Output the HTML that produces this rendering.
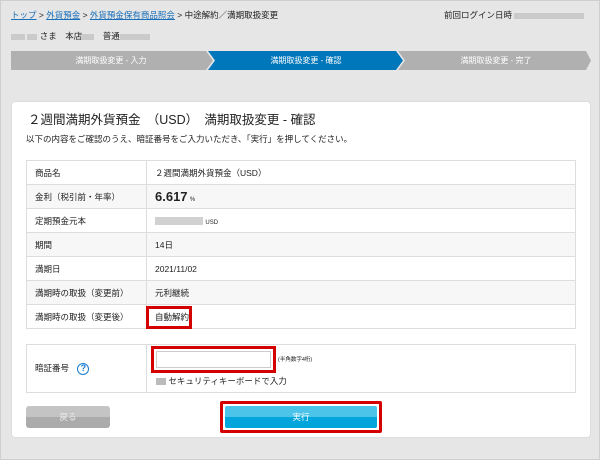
<!DOCTYPE html>
<html><head><meta charset="utf-8"><style>
*{margin:0;padding:0;box-sizing:border-box}
body{width:600px;height:460px;background:#e6e6e6;font-family:"Liberation Sans","Noto Sans CJK JP",sans-serif;font-size:9px;color:#222;position:relative;overflow:hidden;border:1px solid #cfcfcf}
.a{position:absolute}
a{color:#1a6fb8;text-decoration:underline}
.blur{display:inline-block;background:#bdbdbd;height:6px;vertical-align:middle;opacity:.7}
.step{position:absolute;top:50px;height:19px;color:#fff;font-size:8px;text-align:center;line-height:19px}
.panel{position:absolute;left:10px;top:100px;width:580px;height:337px;background:#fff;border-radius:4px;border:1px solid #ddd}
table{border-collapse:collapse;position:absolute;left:25px;width:550px}
td{border:1px solid #ddd;height:24px;padding-left:8px;font-size:8.5px}
td.l{width:120px}
</style></head><body>
<div class="a" style="left:10px;top:8px;font-size:8.5px"><a>トップ</a> &gt; <a>外貨預金</a> &gt; <a>外貨預金保有商品照会</a> &gt; 中途解約／満期取扱変更</div>
<div class="a" style="left:443px;top:8px;font-size:8.5px">前回ログイン日時 <span class="blur" style="width:70px"></span></div>
<div class="a" style="left:10px;top:29px;font-size:8.5px"><span class="blur" style="width:14px"></span> <span class="blur" style="width:10px"></span> さま　本店<span class="blur" style="width:12px"></span>　普通<span class="blur" style="width:30px"></span></div>
<svg class="a" style="left:10px;top:50px" width="580" height="19">
<polygon points="0,0 195,0 202,9.5 195,19 0,19" fill="#b0b0b0"/>
<polygon points="197,0 385,0 392,9.5 385,19 197,19 204,9.5" fill="#0077bb"/>
<polygon points="387,0 575,0 580,9.5 575,19 387,19 394,9.5" fill="#b0b0b0"/>
</svg>
<div class="step" style="left:10px;width:200px">満期取扱変更 - 入力</div>
<div class="step" style="left:210px;width:190px">満期取扱変更 - 確認</div>
<div class="step" style="left:400px;width:190px">満期取扱変更 - 完了</div>
<div class="panel"></div>
<div class="a" style="left:27px;top:108px;font-size:12.5px">２週間満期外貨預金　（USD）　満期取扱変更 - 確認</div>
<div class="a" style="left:25px;top:132px;font-size:8.5px">以下の内容をご確認のうえ、暗証番号をご入力いただき、「実行」を押してください。</div>
<table style="top:159px">
<tr><td class="l">商品名</td><td>２週間満期外貨預金（USD）</td></tr>
<tr style="background:#f7f7f7"><td class="l">金利（税引前・年率）</td><td><b style="font-size:13px">6.617</b> <span style="font-size:6px">%</span></td></tr>
<tr><td class="l">定期預金元本</td><td><span class="blur" style="width:48px;height:8px"></span> <span style="font-size:6px">USD</span></td></tr>
<tr style="background:#f7f7f7"><td class="l">期間</td><td>14日</td></tr>
<tr><td class="l">満期日</td><td>2021/11/02</td></tr>
<tr style="background:#f7f7f7"><td class="l">満期時の取扱（変更前）</td><td>元利継続</td></tr>
<tr><td class="l">満期時の取扱（変更後）</td><td>自動解約</td></tr>
</table>
<div class="a" style="left:145px;top:305px;width:46px;height:23px;border:3px solid #d40000"></div>
<table style="top:343px"><tr><td class="l" style="height:48px">暗証番号 <span style="display:inline-block;width:12px;height:12px;border:1.5px solid #1a7bd0;border-radius:50%;color:#1a7bd0;text-align:center;line-height:9px;font-size:9px;font-weight:bold;vertical-align:middle;margin-left:6px">?</span></td><td></td></tr></table>
<div class="a" style="left:150px;top:345px;width:125px;height:27px;border:3px solid #d40000;background:#fff"><div style="margin:2px;height:17px;border:1px solid #ccc"></div></div>
<div class="a" style="left:277px;top:354px;font-size:5.5px">(半角数字4桁)</div>
<div class="a" style="left:155px;top:374px;font-size:8.5px"><span style="display:inline-block;width:10px;height:7px;background:#bbb;vertical-align:middle"></span> セキュリティキーボードで入力</div>
<div class="a" style="left:25px;top:405px;width:84px;height:22px;border-radius:3px;background:linear-gradient(#c4c4c4 50%,#ababab 50%);color:#eee;text-align:center;line-height:22px;font-size:8.5px">戻る</div>
<div class="a" style="left:219px;top:400px;width:162px;height:32px;border:3px solid #d40000;border-radius:2px;padding:2px"><div style="height:22px;border-radius:2px;background:linear-gradient(#4cc3e8 50%,#00a5dc 50%);color:#fff;text-align:center;line-height:22px;font-size:8.5px">実行</div></div>
</body></html>
